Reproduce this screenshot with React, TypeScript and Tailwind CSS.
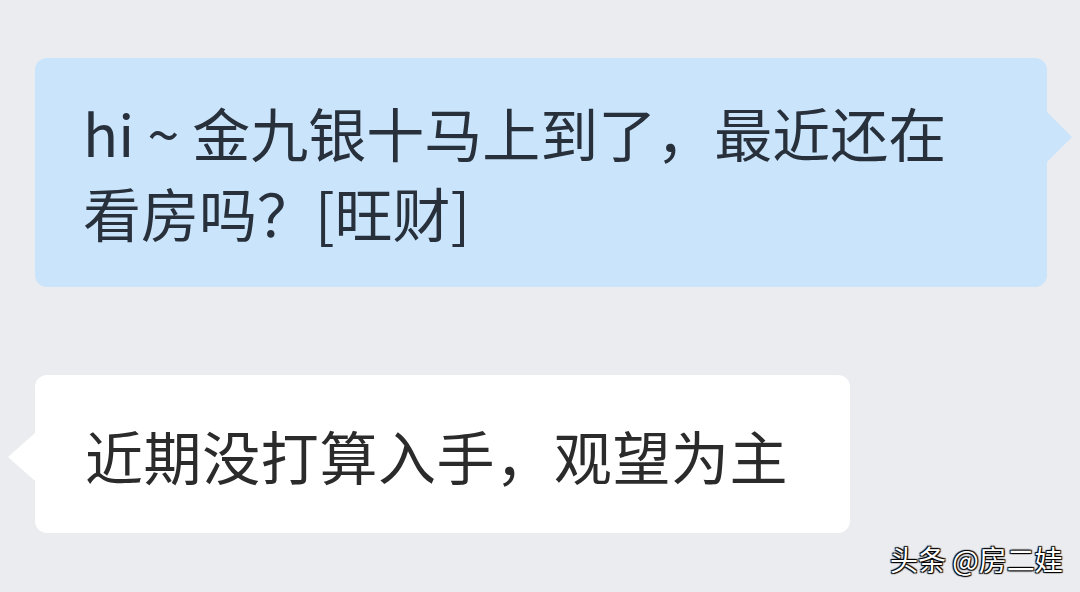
import React from "react";

const font = { fontFamily: '"Noto Sans CJK SC", "Noto Sans", sans-serif' };

export default function App() {
  return (
    <div
      className="w-[1080px] h-[592px] bg-[#ebecf0] flex flex-col overflow-hidden relative"
      style={font}
    >
      <div className="pt-[58px] pl-[35px] flex items-start">
        <div className="relative w-[1012px] h-[229px] bg-[#c9e4fb] rounded-[12px] pl-[48px] pt-[34px] text-[58px] leading-[80px] text-[#27303b]">
          <div className="whitespace-nowrap">hi ~ 金九银十马上到了，最近还在</div>
          <div className="whitespace-nowrap">看房吗？[旺财]</div>
          <div className="absolute left-full top-[54px] w-0 h-0 border-y-[25px] border-y-transparent border-l-[25px] border-l-[#c9e4fb]" />
        </div>
      </div>
      <div className="pt-[88px] pl-[35px] flex items-start">
        <div className="relative w-[815px] h-[158px] bg-white rounded-[12px] pl-[50px] pt-[40px] text-[58px] leading-[80px] tracking-[0.6px] text-[#2b2b2b]">
          <div className="whitespace-nowrap">近期没打算入手，观望为主</div>
          <div className="absolute right-full top-[58px] w-0 h-0 border-y-[24px] border-y-transparent border-r-[27px] border-r-white" />
        </div>
      </div>
      <div
        className="absolute left-[890px] top-[542px] text-[28px] leading-[34px] text-white whitespace-nowrap"
        style={{ textShadow: "1px 1px 1px #000, -1px -1px 1px #000, 1px -1px 1px #000, -1px 1px 1px #000" }}
      >
        头条 @房二娃
      </div>
    </div>
  );
}
